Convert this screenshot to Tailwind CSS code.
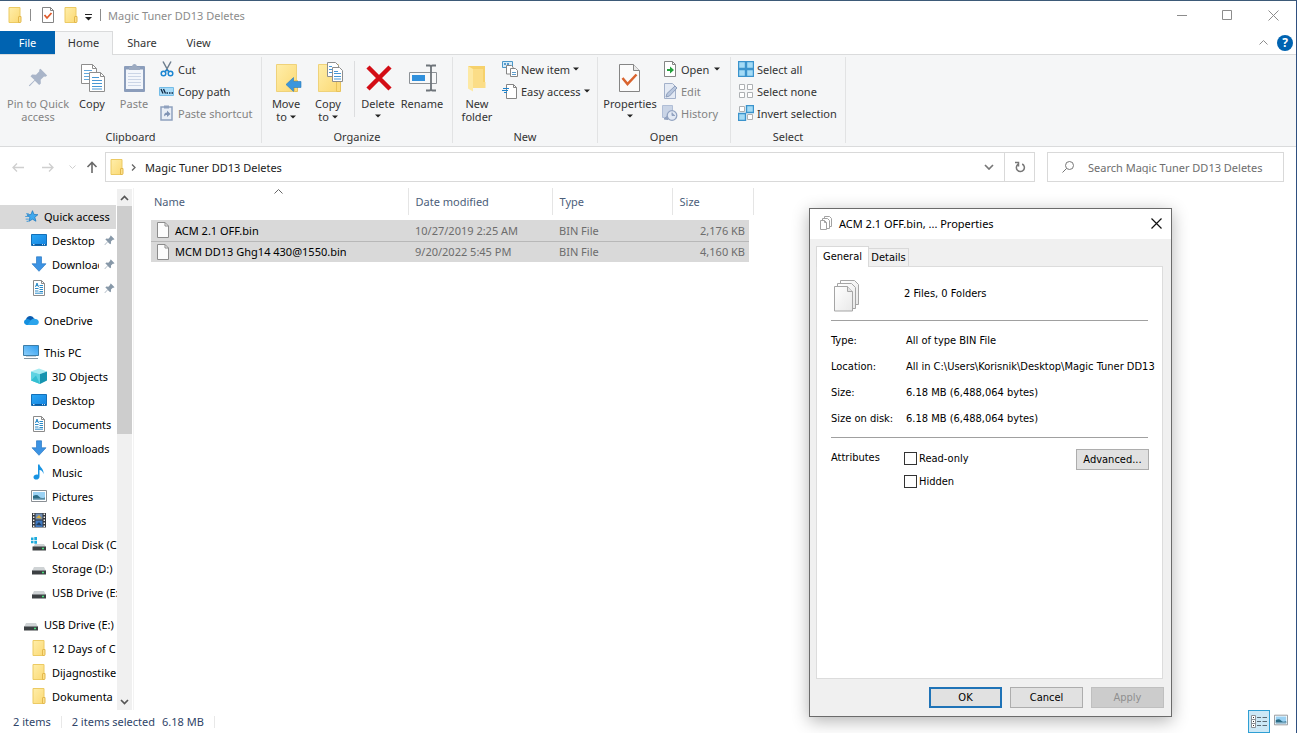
<!DOCTYPE html>
<html lang="en">
<head>
<meta charset="utf-8">
<meta name="viewport" content="width=device-width, initial-scale=1">
<title>Magic Tuner DD13 Deletes</title>
<script src="https://cdn.jsdelivr.net/npm/@tailwindcss/browser@4"></script>
</head>
<body class="flex min-h-screen flex-col border-t border-r border-t-[#3d5a78] border-r-[#2f5080] bg-white font-['Noto_Sans','Open_Sans',sans-serif] text-[11px] leading-[13px] text-[#1a1a1a]">

<svg class="absolute size-0" aria-hidden="true">
  <linearGradient id="g-folder" x1="0" y1="0" x2="1" y2="1"><stop offset="0" stop-color="#ffeeaa"/><stop offset="1" stop-color="#fbd974"/></linearGradient>
  <linearGradient id="g-blue" x1="0" y1="0" x2="1" y2="1"><stop offset="0" stop-color="#2aa8f5"/><stop offset="1" stop-color="#1583e0"/></linearGradient>
  <linearGradient id="g-pc" x1="0" y1="1" x2="1" y2="0"><stop offset="0" stop-color="#8fd0fb"/><stop offset="1" stop-color="#2d9df0"/></linearGradient>
  <linearGradient id="g-page" x1="0" y1="0" x2="1" y2="1"><stop offset="0" stop-color="#ffffff"/><stop offset="1" stop-color="#e9e9e9"/></linearGradient>
  <symbol id="folder" viewBox="0 0 16 16"><path d="M2 .5h11v15H2z" fill="url(#g-folder)" stroke="#ecca63"/><path d="M11.500 15.500V10q0-.5.5-.5h2v5q0 1-1 1z" fill="#fce08a" stroke="#e3b84c"/></symbol>
  <symbol id="page" viewBox="0 0 16 16"><path d="M2.500.5h7.500l3.500 3.500v11.500h-11z" fill="#fcfcfc" stroke="#8c8c8c"/><path d="M10 .5V4h3.500" fill="none" stroke="#8c8c8c"/></symbol>
  <symbol id="check-page" viewBox="0 0 16 16"><path d="M2.500.5h8l3 3v12h-11z" fill="#fff" stroke="#858585"/><path d="M10.500.5v3h3" fill="none" stroke="#858585"/><path d="M4.500 8l2.500 3 4.500-5" fill="none" stroke="#e05a2b" stroke-width="1.800"/></symbol>
  <symbol id="tri" viewBox="0 0 6 4"><path d="M0 .5h6L3 3.500z" fill="#222"/></symbol>
  <symbol id="pin" viewBox="0 0 12 12"><path d="M7.500 .5l4 4-1 .7-.9-.1-2 2 .1 2.200-1 .9-2.600-2.600L1 11l-.5-.5L3.900 7.200 1.500 4.900l1-1 2.300.1 2-2-.1-.9z" fill="currentColor"/></symbol>
  <symbol id="desktop" viewBox="0 0 16 16"><path d="M.5 2.500h15v11H.5z" fill="url(#g-blue)" stroke="#1470b8"/><path d="M1 12h14v1.500H1z" fill="#0c5a9e"/><path d="M2 12.600h1.500M11 12.600h1M13 12.600h1" stroke="#d6ecff"/></symbol>
  <symbol id="down" viewBox="0 0 16 16"><path d="M5.500.8h5v7h4.500L8 15.300 1 7.800h4.500z" fill="#3c93e3" stroke="#2a79c4" stroke-width=".7"/></symbol>
  <symbol id="doc" viewBox="0 0 16 16"><path d="M2.500.5h8l3 3v12h-11z" fill="#fff" stroke="#8b8b8b"/><path d="M10.500.5v3h3" fill="none" stroke="#8b8b8b"/><path d="M4.500 7l1.500-4 1.500 4M5 5.500h2M8.500 5.500H12M4 8.500h3.500M8.500 7.500H12M8.500 9.500H12M4 11h3.500M4 13.200h8M8.500 11.500H12" fill="none" stroke="#2b8bc8"/></symbol>
  <symbol id="star" viewBox="-1 -1 18 18"><path d="M9.700 1l1.600 4.200 4.500.3-3.500 2.900 1.300 4.500-3.900-2.300L5.600 13l1.200-4.400L3.500 5.700l4.400-.3z" fill="#3fa9ee" stroke="#1976bd" stroke-width=".8" transform="translate(0 1)"/><path d="M2.500 5.500h3M1.500 8.500h4M2 11.500h3.500M3 14h2" stroke="#1f8bd8" stroke-width=".9"/></symbol>
  <symbol id="cloud" viewBox="0 0 16 16"><path d="M3 7.500C3.800 4 8.500 2.500 11 6.500l2 4-8 2z" fill="#0b5cb0"/><path d="M3.500 13A3 3 0 0 1 3 7.200c2-.8 4 .4 8.500 4.300V13z" fill="#1490df"/><path d="M7 9.500c2-3 4-3.400 5-2.500 2.500-.2 3.800 1.600 3.800 3S15 13 13 13H4.500z" fill="#2ba4ec"/></symbol>
  <symbol id="pc" viewBox="0 0 16 16"><path d="M.5 1.500h15v10H.5z" fill="url(#g-pc)" stroke="#3d7ea8"/><path d="M3 12.500h10" stroke="#c9d3da"/><path d="M1 14.500h14" stroke="#8294a0"/></symbol>
  <symbol id="cube" viewBox="0 0 16 16"><path d="M0 3.500L8 .5l8 3-7 2.500z" fill="#a6ecf2"/><path d="M0 3.500L9 6v10L0 12.500z" fill="#5fd3e2"/><path d="M9 6l7-2.500v9L9 16z" fill="#1694b0"/><path d="M0 12.500l5-5 4 8.500z" fill="#35bfd2"/></symbol>
  <symbol id="music" viewBox="0 0 16 16"><path d="M7 .5h1.500c.3 3 4.500 4 4 9.500-.8-3-2-3.800-4-4v6.500c0 4-6 4-6 .8 0-2.300 2.500-3.200 4.500-2.600z" fill="#1893e2"/></symbol>
  <symbol id="picture" viewBox="0 0 16 16"><path d="M.5 2.500h15v11H.5z" fill="#fff" stroke="#8a8f94"/><path d="M2 4h12v8H2z" fill="#9bd2f4"/><path d="M2 8q4-2 6 .5t6 1V11H2z" fill="#2b6c86"/><path d="M2 10.500h12V12H2z" fill="#7fa9bf"/></symbol>
  <symbol id="video" viewBox="0 0 16 16"><path d="M1 1h14v14.500H1z" fill="#34383d"/><path d="M4.500 1.500h7v6h-7z" fill="#6f8db5"/><path d="M4.500 8.500h7v6.500h-7z" fill="#3f79c2"/><path d="M5 6l3-3 3 3.500z" fill="#d6ac3f"/><path d="M5 13l3-3 3 3.500z" fill="#26405f"/><path d="M2.700 1.500V15.500M13.300 1.500V15.500" stroke="#f3f3f3" stroke-width="1.400" stroke-dasharray="1.500 1.500"/></symbol>
  <symbol id="drive" viewBox="0 0 16 16"><path d="M3 7h10l2 4H1z" fill="#cfd3d5"/><path d="M1 10.500h14v4H1z" fill="#3c4043"/><path d="M1 10.500h14" stroke="#85898c"/><path d="M11 12.500h2" stroke="#46e07a" stroke-width="1.400"/></symbol>
  <symbol id="windrive" viewBox="0 0 16 16"><path d="M4 8h9l2 3H2z" fill="#cfd3d5"/><path d="M1.500 10.500h13.500v4H1.500z" fill="#3c4043"/><path d="M11 12.500h2" stroke="#46e07a" stroke-width="1.400"/><path d="M0 1.500h2.500V4H0zM3.300 1H6v3H3.300zM0 4.800h2.500v2.400H0zM3.300 4.800H6v3H3.300z" fill="#1eabdc"/></symbol>
</svg>

<!-- Title bar -->
<header class="flex h-[30px] items-center pb-0.5 pl-[7px] text-[#8c8c8c]">
  <svg class="size-4"><use href="#folder"/></svg>
  <span class="ml-[7px] h-3 w-px bg-[#8c8c8c]"></span>
  <svg class="ml-[9px] size-4"><use href="#check-page"/></svg>
  <svg class="ml-[7px] size-4"><use href="#folder"/></svg>
  <svg class="mt-1 ml-1.5 h-[7px] w-[7px]" viewBox="0 0 7 7"><path d="M0 .5h7" stroke="#222"/><path d="M0 3h7L3.500 6.500z" fill="#222"/></svg>
  <span class="ml-2 h-3 w-px bg-[#8c8c8c]"></span>
  <h1 class="ml-[7px] grow">Magic Tuner DD13 Deletes</h1>
  <button aria-label="Minimize" class="grid h-full w-[45px] place-items-center"><svg class="size-[11px]" viewBox="0 0 11 11"><path d="M0 5.500h10" stroke="#8c8c8c"/></svg></button>
  <button aria-label="Maximize" class="grid h-full w-[45px] place-items-center"><svg class="size-[11px]" viewBox="0 0 11 11"><path d="M.5.5h9v9h-9z" fill="none" stroke="#8c8c8c"/></svg></button>
  <button aria-label="Close" class="grid h-full w-[46px] place-items-center"><svg class="size-[11px]" viewBox="0 0 11 11"><path d="M.5.5l10 10m0-10l-10 10" stroke="#8c8c8c"/></svg></button>
</header>

<!-- Ribbon tabs -->
<nav class="flex h-6 items-stretch border-b border-[#dadbdc] text-[#333]">
  <button class="w-[55px] bg-[#0063b1] text-white">File</button>
  <button class="-mb-px w-[58px] border-t border-r border-[#dadbdc] bg-[#f5f6f7] pb-0.5">Home</button>
  <button class="w-[58px]">Share</button>
  <button class="w-[55px]">View</button>
  <span class="grow"></span>
  <button aria-label="Collapse ribbon" class="grid w-5 place-items-center"><svg class="h-[5px] w-[9px]" viewBox="0 0 9 5"><path d="M.5 4.500l4-4 4 4" fill="none" stroke="#8c8c8c"/></svg></button>
  <button aria-label="Help" class="mr-[3px] ml-1 grid size-4 place-items-center self-center rounded-full bg-[#0063b1] text-[12px] font-bold text-white">?</button>
</nav>

<!-- Ribbon -->
<div class="flex h-[92px] shrink-0 border-b border-[#dadbdc] bg-[#f5f6f7] pt-0.5 pb-[3px] text-[#333]">

  <section class="flex w-[262px] flex-col border-r border-[#e2e3e4]">
    <div class="flex grow pl-1">
      <button class="flex w-[68px] flex-col items-center text-[#838383]"><svg class="mt-[5px] mb-[3px] size-8 p-1.5 text-[#a9b5c9]"><use href="#pin"/></svg>Pin to Quick<br>access</button>
      <button class="flex w-10 flex-col items-center"><svg class="mt-[5px] mb-[3px] size-8" viewBox="0 0 32 32"><g fill="#fff" stroke="#8e8e8e"><path d="M5.500 2.500h11l4 4v15h-15z"/><path d="M16.500 2.500v4h4" fill="none"/></g><path d="M8 8.500h8M8 11.500h7M8 14.500h7M8 17.500h7" stroke="#64a9dc"/><g fill="#fff" stroke="#8e8e8e"><path d="M13.500 10.500h11l4 4v15h-15z"/><path d="M24.500 10.500v4h4" fill="none"/></g><path d="M16 15.500h7M16 18.500h10M16 21.500h10M16 24.500h10M16 27h10" stroke="#4797d4"/></svg>Copy</button>
      <button class="flex w-11 flex-col items-center text-[#838383]"><svg class="mt-[5px] mb-[3px] size-8" viewBox="0 0 32 32"><path d="M7 4h19a1 1 0 0 1 1 1v24a1 1 0 0 1-1 1H7a1 1 0 0 1-1-1V5a1 1 0 0 1 1-1z" fill="#8b9dbb"/><path d="M8 7.500h17v19.500H8z" fill="#f3f6fb"/><path d="M10 11.500h13M10 14.500h13M10 17.500h13M10 20.500h13M10 23.500h13" stroke="#cbd5e6"/><path d="M11 8V5h3c0-4 5-4 5 0h3v3z" fill="#9caac0"/></svg>Paste</button>
      <div class="flex flex-col pt-px pl-[3px]">
        <button class="flex h-[22px] items-center gap-[3px]"><svg class="size-4" viewBox="0 0 16 16"><path d="M4 .5l5.500 10M12 .5l-5.500 10" stroke="#6d7d8d" stroke-width="1.500"/><circle cx="4.500" cy="12.500" r="2.300" fill="none" stroke="#1c86d2" stroke-width="1.500"/><circle cx="11.500" cy="12.500" r="2.300" fill="none" stroke="#1c86d2" stroke-width="1.500"/><path d="M6 10.500L8 9l2 1.500" fill="none" stroke="#1c86d2" stroke-width="1.500"/></svg>Cut</button>
        <button class="flex h-[22px] items-center gap-[3px]"><svg class="size-4" viewBox="0 0 16 16"><path d="M.5 4.500h14v8H.5z" fill="#a9dbf7" stroke="#74bde8"/><path d="M2 6l2 4.500M4.500 6l2 4.500M7.500 10H9M10 10h1.500M12.500 10H14" stroke="#102a45" stroke-width="1.300"/></svg>Copy path</button>
        <button class="flex h-[22px] items-center gap-[3px] text-[#838383]"><svg class="size-4" viewBox="0 0 16 16"><path d="M2 2h11v13H2z" fill="#e9eef6" stroke="#8fa1be" stroke-width="1.500"/><path d="M5 .5h5v3H5z" fill="#8fa1be"/><path d="M5 11.500c0-3 1-4 3-4V5.500l3.500 3.500L8 12v-2c-1.500 0-2 .5-3 1.500z" fill="#7f93b4"/></svg>Paste shortcut</button>
      </div>
    </div>
    <h2 class="text-center">Clipboard</h2>
  </section>

  <section class="flex w-[191px] flex-col border-r border-[#e2e3e4]">
    <div class="flex grow pl-[3px]">
      <button class="flex w-[42px] flex-col items-center"><svg class="mt-[5px] mb-[3px] size-8" viewBox="0 0 32 32"><path d="M6.500 2.500h20v27h-20z" fill="url(#g-folder)" stroke="#efd27a"/><path d="M24.500 18.500h3v11h-3z" fill="#fbdc7e" stroke="#e9c35a"/><path d="M16 22.500l7.500-7v4H31v6h-7.500v4z" fill="#3a96dd" stroke="#2a79b8" stroke-width=".6"/></svg>Move<span class="flex items-center gap-[3px]">to <svg class="h-1 w-1.5"><use href="#tri"/></svg></span></button>
      <button class="flex w-[42px] flex-col items-center"><svg class="mt-[5px] mb-[3px] size-8" viewBox="0 0 32 32"><path d="M6.500 2.500h20v27h-20z" fill="url(#g-folder)" stroke="#efd27a"/><path d="M24.500 18.500h4v11h-4z" fill="#fbdc7e" stroke="#e9c35a"/><g fill="#fff" stroke="#8e8e8e"><path d="M15.500.5h8l3 3v11h-11z"/><path d="M20.500 5.500h7l3 3v11h-10z"/></g><path d="M17 4.500h3M17 7.500h3M17 10.500h3M22 9.500h4M22 11.500h7M22 14.500h7M22 17h7" stroke="#4797d4"/></svg>Copy<span class="flex items-center gap-[3px]">to <svg class="h-1 w-1.5"><use href="#tri"/></svg></span></button>
      <span class="mt-1 mr-0.5 ml-[5px] h-14 w-px bg-[#dcdddf]"></span>
      <button class="flex w-[42px] flex-col items-center"><svg class="mt-[5px] mb-[3px] size-8" viewBox="0 0 32 32"><path d="M6 5l22 22M28 5L6 27" stroke="#d30d16" stroke-width="4.500"/></svg>Delete<svg class="mt-1 h-1 w-1.5"><use href="#tri"/></svg></button>
      <button class="ml-0.5 flex w-[42px] flex-col items-center"><svg class="mt-[5px] mb-[3px] size-8" viewBox="0 0 32 32"><path d="M3.500 10.500h27v11h-27z" fill="#f8f9fa" stroke="#8c9196"/><path d="M6 13h13v6H6z" fill="#3090dc"/><path d="M20 3.500h3.500q1.500 0 1.500 2v21q0 2-1.500 2H20M30 3.500h-3.500q-1.500 0-1.500 2v21q0 2 1.500 2H30" fill="none" stroke="#6e747a" stroke-width="1.800"/></svg>Rename</button>
    </div>
    <h2 class="text-center">Organize</h2>
  </section>

  <section class="flex w-[145px] flex-col border-r border-[#e2e3e4]">
    <div class="flex grow pl-[3px]">
      <button class="flex w-[42px] flex-col items-center"><svg class="mt-[5px] mb-[3px] size-8" viewBox="0 0 32 32"><path d="M7 4h17v20l-11 1z" fill="#f6d16b"/><path d="M7 4l5 3v22.500l-5-3z" fill="#fde9a4"/><path d="M12 7h10v13h2.500v6H12z" fill="#fbdd87"/></svg>New<br>folder</button>
      <div class="flex flex-col pt-px pl-1">
        <button class="flex h-[22px] items-center gap-[3px]"><svg class="size-4" viewBox="0 0 16 16"><path d="M.5.5h10v6H.5z" fill="#d4ecfa" stroke="#4b97c8"/><path d="M2 3h2M5 3h2" stroke="#2b7fc0" stroke-width="1.500"/><g fill="#fff" stroke="#858585"><path d="M4.500 4.500h5l1.500 1.500v7H4.500z"/><path d="M8.500 7.500h5l2 2v6h-7z"/></g><path d="M10 11.500h4M10 13.500h4" stroke="#5e9dcc"/></svg>New item<svg class="h-1 w-1.5"><use href="#tri"/></svg></button>
        <button class="flex h-[22px] items-center gap-[3px]"><svg class="size-4" viewBox="0 0 16 16"><path d="M4.500 1.500h7l3 3v11h-10z" fill="#fff" stroke="#858585"/><path d="M11.500 1.500v3h3" fill="none" stroke="#858585"/><path d="M1 5.500h6M0 7.500h6M2 9.500h3" stroke="#1f83cb" stroke-width="1.200"/></svg>Easy access<svg class="h-1 w-1.5"><use href="#tri"/></svg></button>
      </div>
    </div>
    <h2 class="text-center">New</h2>
  </section>

  <section class="flex w-[133px] flex-col border-r border-[#e2e3e4]">
    <div class="flex grow pl-1">
      <button class="flex w-14 flex-col items-center"><svg class="mt-[5px] mb-[3px] size-8" viewBox="0 0 32 32"><path d="M5.500 2.500h14l6 6v21h-20z" fill="#fbfbfb" stroke="#858585"/><path d="M19.500 2.500v6h6" fill="#e8e8e8" stroke="#858585"/><path d="M8.500 16l5 6 9-9.500" fill="none" stroke="#d9642f" stroke-width="2.500"/></svg>Properties<svg class="mt-1 h-1 w-1.5"><use href="#tri"/></svg></button>
      <div class="flex flex-col pt-px pl-1">
        <button class="flex h-[22px] items-center gap-[3px]"><svg class="size-4" viewBox="0 0 16 16"><path d="M2.500.5h8l3 3v12h-11z" fill="#fff" stroke="#858585"/><path d="M10.500.5v3h3" fill="none" stroke="#858585"/><path d="M5 8h3V5.500L12 9l-4 3.500V10H5z" fill="#24a03c"/></svg>Open<svg class="ml-0.5 h-1 w-1.5"><use href="#tri"/></svg></button>
        <button class="flex h-[22px] items-center gap-[3px] text-[#838383]"><svg class="size-4" viewBox="0 0 16 16"><path d="M2.500.5h8l3 3v12h-11z" fill="#e4eaf4" stroke="#a3b1ca"/><path d="M4 14l1-3.500L13 3l2 2-7.500 8z" fill="#b9c7de" stroke="#8c9dbb"/></svg>Edit</button>
        <button class="flex h-[22px] items-center gap-[3px] text-[#838383]"><svg class="size-4" viewBox="0 0 16 16"><path d="M.5.5h10v12H.5z" fill="#c9d4e6" stroke="#b0bed6"/><circle cx="10" cy="10.500" r="4.800" fill="#e2e9f4" stroke="#92a3c1" stroke-width="1.300"/><path d="M10 7.500v3h3M2 14l4 .5-1.500-3z" fill="#92a3c1" stroke="#92a3c1"/></svg>History</button>
      </div>
    </div>
    <h2 class="text-center">Open</h2>
  </section>

  <section class="flex w-[115px] flex-col border-r border-[#e2e3e4]">
    <div class="flex grow flex-col pt-px pl-[7px]">
      <button class="flex h-[22px] items-center gap-[3px]"><svg class="size-4" viewBox="0 0 16 16"><path d="M.5.5h7v7h-7zM8.500.5h7v7h-7zM.5 8.500h7v7h-7zM8.500 8.500h7v7h-7z" fill="#a4dbf6" stroke="#3b93cc" stroke-width="1.400"/></svg>Select all</button>
      <button class="flex h-[22px] items-center gap-[3px]"><svg class="size-4" viewBox="0 0 16 16"><path d="M1.500 1.500h5v5h-5zM9.500 1.500h5v5h-5zM1.500 9.500h5v5h-5zM9.500 9.500h5v5h-5z" fill="#fff" stroke="#adb0b3"/></svg>Select none</button>
      <button class="flex h-[22px] items-center gap-[3px]"><svg class="size-4" viewBox="0 0 16 16"><path d="M1.500 1.500h5v5h-5zM9.500 9.500h5v5h-5z" fill="#fff" stroke="#adb0b3"/><path d="M8.500.5h7v7h-7zM.5 8.500h7v7h-7z" fill="#a4dbf6" stroke="#3b93cc" stroke-width="1.400"/></svg>Invert selection</button>
    </div>
    <h2 class="text-center">Select</h2>
  </section>
</div>

<!-- Address row -->
<div class="flex h-[41px] shrink-0 items-center pr-3 pb-px text-[#1a1a1a]">
  <button aria-label="Back" class="ml-3 grid w-3 place-items-center"><svg class="h-[9px] w-3" viewBox="0 0 12 9"><path d="M12 4.500H1M5 .5l-4 4 4 4" fill="none" stroke="#cfcfcf" stroke-width="1.300"/></svg></button>
  <button aria-label="Forward" class="ml-[18px] grid w-3 place-items-center"><svg class="h-[9px] w-3" viewBox="0 0 12 9"><path d="M0 4.500h11M7 .5l4 4-4 4" fill="none" stroke="#cfcfcf" stroke-width="1.300"/></svg></button>
  <button aria-label="Recent locations" class="ml-3.5 grid w-2 place-items-center"><svg class="h-1 w-[7px]" viewBox="0 0 7 4"><path d="M.5.5l3 3 3-3" fill="none" stroke="#cfcfcf"/></svg></button>
  <button aria-label="Up" class="ml-[9px] grid w-3.5 place-items-center"><svg class="size-3" viewBox="0 0 12 12"><path d="M6 12V1.500M1.500 6L6 1.500 10.500 6" fill="none" stroke="#6a6a6a" stroke-width="1.600"/></svg></button>
  <div class="ml-1.5 flex h-[30px] grow items-center border border-[#d9d9d9] pl-[3px]">
    <svg class="size-4"><use href="#folder"/></svg>
    <svg class="ml-1.5 h-[7px] w-[5px]" viewBox="0 0 5 7"><path d="M1 .5l3 3-3 3" fill="none" stroke="#666" stroke-width="1.300"/></svg>
    <span class="ml-[9px] grow">Magic Tuner DD13 Deletes</span>
    <button aria-label="Previous locations" class="grid h-full w-[30px] place-items-center"><svg class="h-1.5 w-[10px]" viewBox="0 0 10 6"><path d="M1 1l4 4 4-4" fill="none" stroke="#777" stroke-width="1.700"/></svg></button>
    <button aria-label="Refresh" class="grid h-full w-[30px] place-items-center border-l border-[#d9d9d9]"><svg class="size-3" viewBox="0 0 12 12"><path d="M8.200 3a4 4 0 1 1-4 .2M1 1.500h3.500v4" fill="none" stroke="#777" stroke-width="1.500"/></svg></button>
  </div>
  <label class="ml-3 flex h-[30px] w-[237px] items-center border border-[#d9d9d9] pl-3.5 text-[#6d6d6d]">
    <svg class="size-3 shrink-0" viewBox="0 0 12 12"><circle cx="7.500" cy="4.500" r="4" fill="none" stroke="#777"/><path d="M4.500 7.500L.5 11.500" stroke="#777"/></svg>
    <input type="text" aria-label="Search" placeholder="Search Magic Tuner DD13 Deletes" class="ml-3.5 w-full min-w-0 outline-none placeholder:text-[#6d6d6d]">
  </label>
</div>

<div class="flex grow">
  <!-- Navigation pane -->
  <nav class="w-[117px] shrink-0 overflow-hidden pt-[17px] text-black">
    <ul class="[&_a]:flex [&_a]:h-6 [&_a]:items-center [&_a]:gap-[5px] [&_a]:pb-0.5 [&_a]:whitespace-nowrap [&_svg]:shrink-0">
      <li><a href="#" class="mr-px bg-[#d9d9d9] pl-[23px]"><svg class="size-4"><use href="#star"/></svg>Quick access</a></li>
      <li><a href="#" class="pl-[31px]"><svg class="size-4"><use href="#desktop"/></svg><span class="w-[47px] overflow-hidden">Desktop</span><svg class="size-[11px] text-[#8798a8]"><use href="#pin"/></svg></a></li>
      <li><a href="#" class="pl-[31px]"><svg class="size-4"><use href="#down"/></svg><span class="w-[47px] overflow-hidden">Downloads</span><svg class="size-[11px] text-[#8798a8]"><use href="#pin"/></svg></a></li>
      <li><a href="#" class="pl-[31px]"><svg class="size-4"><use href="#doc"/></svg><span class="w-[47px] overflow-hidden">Documents</span><svg class="size-[11px] text-[#8798a8]"><use href="#pin"/></svg></a></li>
      <li class="mt-2"><a href="#" class="pl-[23px]"><svg class="size-4"><use href="#cloud"/></svg>OneDrive</a></li>
      <li class="mt-2"><a href="#" class="pl-[23px]"><svg class="size-4"><use href="#pc"/></svg>This PC</a></li>
      <li><a href="#" class="pl-[31px]"><svg class="size-4"><use href="#cube"/></svg>3D Objects</a></li>
      <li><a href="#" class="pl-[31px]"><svg class="size-4"><use href="#desktop"/></svg>Desktop</a></li>
      <li><a href="#" class="pl-[31px]"><svg class="size-4"><use href="#doc"/></svg>Documents</a></li>
      <li><a href="#" class="pl-[31px]"><svg class="size-4"><use href="#down"/></svg>Downloads</a></li>
      <li><a href="#" class="pl-[31px]"><svg class="size-4"><use href="#music"/></svg>Music</a></li>
      <li><a href="#" class="pl-[31px]"><svg class="size-4"><use href="#picture"/></svg>Pictures</a></li>
      <li><a href="#" class="pl-[31px]"><svg class="size-4"><use href="#video"/></svg>Videos</a></li>
      <li><a href="#" class="pl-[31px]"><svg class="size-4"><use href="#windrive"/></svg>Local Disk (C:)</a></li>
      <li><a href="#" class="pl-[31px]"><svg class="size-4"><use href="#drive"/></svg>Storage (D:)</a></li>
      <li><a href="#" class="pl-[31px]"><svg class="size-4"><use href="#drive"/></svg>USB Drive (E:)</a></li>
      <li class="mt-2"><a href="#" class="pl-[23px]"><svg class="size-4"><use href="#drive"/></svg>USB Drive (E:)</a></li>
      <li><a href="#" class="pl-[31px]"><svg class="size-4"><use href="#folder"/></svg>12 Days of C</a></li>
      <li><a href="#" class="pl-[31px]"><svg class="size-4"><use href="#folder"/></svg>Dijagnostike</a></li>
      <li><a href="#" class="pl-[31px]"><svg class="size-4"><use href="#folder"/></svg>Dokumenta</a></li>
    </ul>
  </nav>

  <div class="flex flex-col border-r border-[#f3f3f3] pt-px pr-px">
    <div class="flex grow flex-col bg-[#f0f0f0]">
      <button aria-label="Scroll up" class="grid h-[17px] w-[15px] place-items-center"><svg class="h-[6px] w-[9px]" viewBox="0 0 9 6"><path d="M1 5l3.500-3.500L8 5" fill="none" stroke="#555" stroke-width="1.700"/></svg></button>
      <div class="h-[228px] bg-[#cdcdcd]"></div>
      <span class="grow"></span>
      <button aria-label="Scroll down" class="grid h-[17px] w-[15px] place-items-center"><svg class="h-[6px] w-[9px]" viewBox="0 0 9 6"><path d="M1 1l3.500 3.500L8 1" fill="none" stroke="#555" stroke-width="1.700"/></svg></button>
    </div>
  </div>

  <!-- File list -->
  <main class="grow pl-[17px]">
    <table class="w-[602px] table-fixed border-collapse text-left">
      <colgroup><col class="w-[257px]"><col class="w-[144px]"><col class="w-[120px]"><col class="w-[77px]"><col class="w-1"></colgroup>
      <thead>
        <tr class="h-[27px] text-[#4c607a]">
          <th scope="col" class="relative border-r border-[#e5e5e5] pl-[3px] font-normal">Name<svg class="absolute top-px left-[123px] h-[5px] w-[9px]" viewBox="0 0 9 5"><path d="M.5 4.500l4-4 4 4" fill="none" stroke="#666"/></svg></th>
          <th scope="col" class="border-r border-[#e5e5e5] pl-[7px] font-normal">Date modified</th>
          <th scope="col" class="border-r border-[#e5e5e5] pl-[7px] font-normal">Type</th>
          <th scope="col" class="pl-[7px] font-normal">Size</th>
          <td class="border-r border-[#e5e5e5]"></td>
        </tr>
        <tr class="h-[5px]"><td colspan="5"></td></tr>
      </thead>
      <tbody class="text-[#6d6d6d]">
        <tr class="h-[21px]">
          <td class="border-b border-[#b8b8b8] bg-[#d9d9d9] pl-1 text-black"><span class="flex items-center gap-1"><svg class="size-4"><use href="#page"/></svg>ACM 2.1 OFF.bin</span></td>
          <td class="border-b border-[#b8b8b8] bg-[#d9d9d9] pl-[7px]">10/27/2019 2:25 AM</td>
          <td class="border-b border-[#b8b8b8] bg-[#d9d9d9] pl-[7px]">BIN File</td>
          <td class="border-b border-[#b8b8b8] bg-[#d9d9d9] pr-1 text-right">2,176 KB</td><td></td>
        </tr>
        <tr class="h-[21px]">
          <td class="bg-[#d9d9d9] pl-1 text-black"><span class="flex items-center gap-1"><svg class="size-4"><use href="#page"/></svg>MCM DD13 Ghg14 430@1550.bin</span></td>
          <td class="bg-[#d9d9d9] pl-[7px]">9/20/2022 5:45 PM</td>
          <td class="bg-[#d9d9d9] pl-[7px]">BIN File</td>
          <td class="bg-[#d9d9d9] pr-1 text-right">4,160 KB</td><td></td>
        </tr>
      </tbody>
    </table>
  </main>
</div>

<!-- Status bar -->
<footer class="flex h-[23px] shrink-0 items-center pl-[13px] text-[#2f4468]">
  <span>2 items</span>
  <span class="mx-[10px] h-3 w-px bg-[#e8e8e8]"></span>
  <span>2 items selected</span>
  <span class="ml-[7px]">6.18 MB</span>
  <span class="ml-[10px] h-3 w-px bg-[#e8e8e8]"></span>
  <span class="grow"></span>
  <button aria-label="Details view" class="grid h-[23px] w-[22px] place-items-center border border-[#2f9fd4] bg-[#cce8f6]"><svg class="h-[13px] w-4" viewBox="0 0 16 13"><path d="M.5.5h4v12h-4zM.5 4.500h4M.5 8.500h4" fill="#fff" stroke="#8a8f94"/><path d="M2 2.500h1M2 6.500h1M2 10.500h1" stroke="#333"/><path d="M6 2.500h4M11.500 2.500H16M6 6.500h4M11.500 6.500H16M6 10.500h4M11.500 10.500H16" stroke="#5a6a74"/></svg></button>
  <button aria-label="Large icons view" class="mr-2 mb-1 ml-1 grid size-3.5 place-items-center"><svg class="size-3.5"><use href="#picture"/></svg></button>
</footer>

<!-- Properties window -->
<div role="dialog" aria-label="Properties" class="absolute top-[208px] left-[809px] flex h-[509px] w-[363px] flex-col border border-[#6b6b6b] bg-[#f0f0f0] font-['DejaVu_Sans_Condensed','DejaVu_Sans',sans-serif] text-black shadow-[0_4px_16px_rgba(0,0,0,0.3)]">
  <div class="flex h-[30px] shrink-0 items-center bg-white pb-0.5 pl-[9px] font-['Noto_Sans',sans-serif]">
    <svg class="size-4" viewBox="0 0 16 16"><g fill="#fff" stroke="#a2a2a2"><path d="M5.500 1.500h5l2 2v8h-7z"/><path d="M3.500 3.500h5l2 2v8h-7z"/><path d="M1.500 5.500h4l2 2v7h-6z"/><path d="M5.500 5.500v2h2" fill="none"/></g></svg>
    <h2 class="ml-1 grow">ACM 2.1 OFF.bin, ... Properties</h2>
    <button aria-label="Close properties" class="grid h-full w-[30px] place-items-center"><svg class="size-[11px]" viewBox="0 0 11 11"><path d="M.5.5l10 10m0-10l-10 10" stroke="#111" stroke-width="1.200"/></svg></button>
  </div>
  <div class="flex grow flex-col px-1.5 pt-1.5 pb-2">
    <div class="flex h-[21px] items-end">
      <button class="z-1 -mb-px h-[21px] w-[53px] border border-b-0 border-[#d9d9d9] bg-white pb-0.5">General</button>
      <button class="h-[18px] w-10 border border-b-0 border-l-0 border-[#d9d9d9]">Details</button>
    </div>
    <div class="mr-0.5 flex grow flex-col border border-[#dcdcdc] bg-white px-[14px] pt-[10px]">
      <div class="flex h-11 items-center border-b border-[#a0a0a0] pb-1.5">
        <svg class="ml-0.5 size-8" viewBox="0 0 32 32"><g fill="url(#g-page)" stroke="#a5a5a5"><path d="M7.500.5h14l4 4v20h-18z"/><path d="M4.500 3.500h14l4 4v21h-18z"/><path d="M1.500 6.500h13l5 5v19.500h-18z"/><path d="M14.500 6.500v5h5" fill="#e2e2e2"/></g></svg>
        <span class="ml-[39px] pb-1">2 Files, 0 Folders</span>
      </div>
      <dl class="grid h-[117px] grid-cols-[75px_1fr] content-start gap-y-[13px] border-b border-[#a0a0a0] pt-[13px] whitespace-nowrap">
        <dt>Type:</dt><dd>All of type BIN File</dd>
        <dt>Location:</dt><dd>All in C:\Users\Korisnik\Desktop\Magic Tuner DD13</dd>
        <dt>Size:</dt><dd>6.18 MB (6,488,064 bytes)</dd>
        <dt>Size on disk:</dt><dd>6.18 MB (6,488,064 bytes)</dd>
      </dl>
      <fieldset class="flex items-start pt-[11px]">
        <span class="w-[73px] pt-0.5">Attributes</span>
        <div class="flex grow flex-col gap-[10px] pt-[3px]">
          <label class="flex items-center gap-0.5"><input type="checkbox" class="size-[13px] appearance-none border border-[#333] bg-white">Read-only</label>
          <label class="flex items-center gap-0.5"><input type="checkbox" class="size-[13px] appearance-none border border-[#333] bg-white">Hidden</label>
        </div>
        <button class="-mr-px h-[21px] w-[73px] border border-[#adadad] bg-[#e1e1e1]">Advanced...</button>
      </fieldset>
    </div>
    <div class="mt-2 flex justify-end gap-2 pr-px">
      <button class="h-[21px] w-[73px] border-2 border-[#1f73b7] bg-[#e1e1e1]">OK</button>
      <button class="h-[21px] w-[73px] border border-[#adadad] bg-[#e1e1e1]">Cancel</button>
      <button disabled class="h-[21px] w-[73px] border border-[#bfbfbf] bg-[#cccccc] text-[#8f8f8f]">Apply</button>
    </div>
  </div>
</div>
</body>
</html>
